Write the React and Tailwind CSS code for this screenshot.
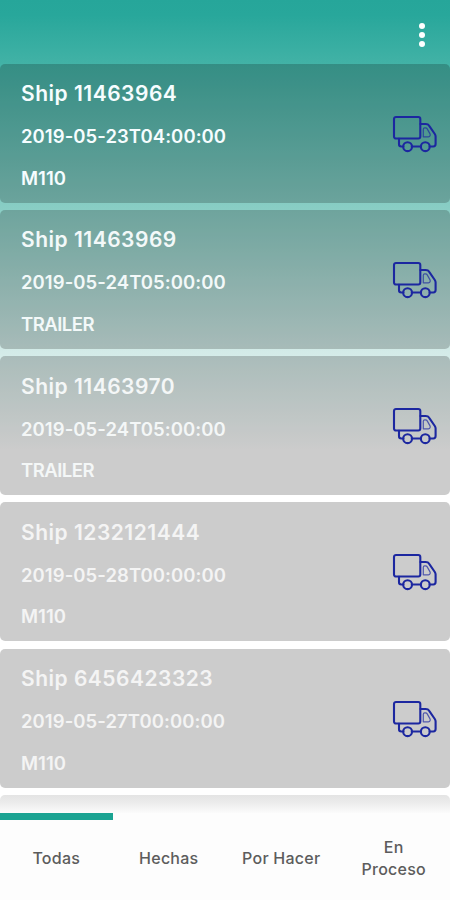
import clsx from 'clsx';

const shipments = [
    { id: '11463964', date: '2019-05-23T04:00:00', unit: 'M110', text: 'text-[#f6fdff]' },
    { id: '11463969', date: '2019-05-24T05:00:00', unit: 'TRAILER', text: 'text-[#f3f9f9]' },
    { id: '11463970', date: '2019-05-24T05:00:00', unit: 'TRAILER', text: 'text-[#f4f7f7]' },
    { id: '1232121444', date: '2019-05-28T00:00:00', unit: 'M110', text: 'text-[#f4f4f4]' },
    { id: '6456423323', date: '2019-05-27T00:00:00', unit: 'M110', text: 'text-[#f4f4f4]' },
];

const tabs = ['Todas', 'Hechas', 'Por Hacer', 'En Proceso'];

const TruckIcon = () => (
    <svg
        viewBox="0 0 46 38"
        className="w-[46px] h-[38px] mt-px shrink-0"
        fill="none"
        stroke="#1c27a0"
        strokeWidth="2.1"
        strokeLinejoin="round"
        strokeLinecap="round"
    >
        <rect x="2" y="2" width="26.3" height="21.5" rx="2" />
        <path d="M28.500 9h5.200c1.600 0 2.700.5 3.500 1.800l5.600 8.200c.6.9.8 1.500.8 2.500v7.600c0 1.500-.9 2.400-2.300 2.400h-3.600M28.800 31.500h-9M11.400 31.500h-2.200c-1.300 0-2.200-.9-2.200-2.200v-5.600" />
        <circle cx="15.600" cy="31.700" r="4.400" />
        <circle cx="33.300" cy="31.700" r="4.400" />
        <path
            d="M31.300 21.800v-7.500c0-.9.500-1.400 1.400-1.400h.8c.8 0 1.300.3 1.700 1l2.700 4.700c.8 1.700.1 3.200-1.500 3.200z"
            strokeWidth="1.200"
            strokeOpacity="0.7"
        />
    </svg>
);

const ShipmentCard = ({ id, date, unit, text }) => (
    <li className="flex items-center justify-between h-[139px] shrink-0 pl-[21px] pr-3 rounded-[5px] bg-black/20">
        <div className={clsx('h-full pt-[17.5px] font-semibold whitespace-nowrap', text)}>
            <h2 className="text-[21px] leading-[26px] tracking-[0.5px]">Ship {id}</h2>
            <p className="mt-[17px] text-[18.5px] leading-6 tracking-[0.06px]">{date}</p>
            <p className={clsx('mt-[17.5px] text-[18.5px] leading-6', unit === 'TRAILER' && 'tracking-[-0.5px]')}>
                {unit}
            </p>
        </div>
        <TruckIcon />
    </li>
);

const TabBar = ({ active }) => (
    <nav className="flex h-[87px] shrink-0 bg-[#fdfdfd]">
        {tabs.map((tab) => (
            <button
                key={tab}
                className={clsx(
                    'flex-1 basis-0 flex items-center justify-center border-t-[7px] pb-[4px] text-base leading-[22px] font-medium tracking-[0.25px] text-[#5c5c5c]',
                    tab === active ? 'border-[#1aa392]' : 'border-transparent'
                )}
            >
                <span className={tab === 'En Proceso' ? 'w-20' : 'whitespace-nowrap'}>{tab}</span>
            </button>
        ))}
    </nav>
);

const App = () => {
    return (
        <div className="flex flex-col w-[450px] h-[900px] overflow-hidden font-['Inter',sans-serif] bg-[linear-gradient(180deg,#26a69a_0px,#28a79b_15px,#42b2a6_64px,#88cdc4_206px,#d3ebe8_352px,#ffffff_450px)]">
            <header className="flex justify-end items-start h-[63.5px] shrink-0 pt-[23px] pr-[25px]">
                <button aria-label="Menu" className="flex flex-col gap-[3px]">
                    <span className="size-[6px] rounded-full bg-white" />
                    <span className="size-[6px] rounded-full bg-white" />
                    <span className="size-[6px] rounded-full bg-white" />
                </button>
            </header>
            <ul className="flex flex-col flex-1 min-h-0 gap-[7.25px] overflow-hidden">
                {shipments.map((shipment) => (
                    <ShipmentCard key={shipment.id} {...shipment} />
                ))}
                {/* next card fades out behind the tab bar */}
                <li className="h-[139px] shrink-0 rounded-[5px] bg-[linear-gradient(180deg,#e4e4e4_0px,#ececec_8px,#fbfbfb_18px,#fdfdfd_100%)]" />
            </ul>
            <TabBar active="Todas" />
        </div>
    );
};

export default App;
